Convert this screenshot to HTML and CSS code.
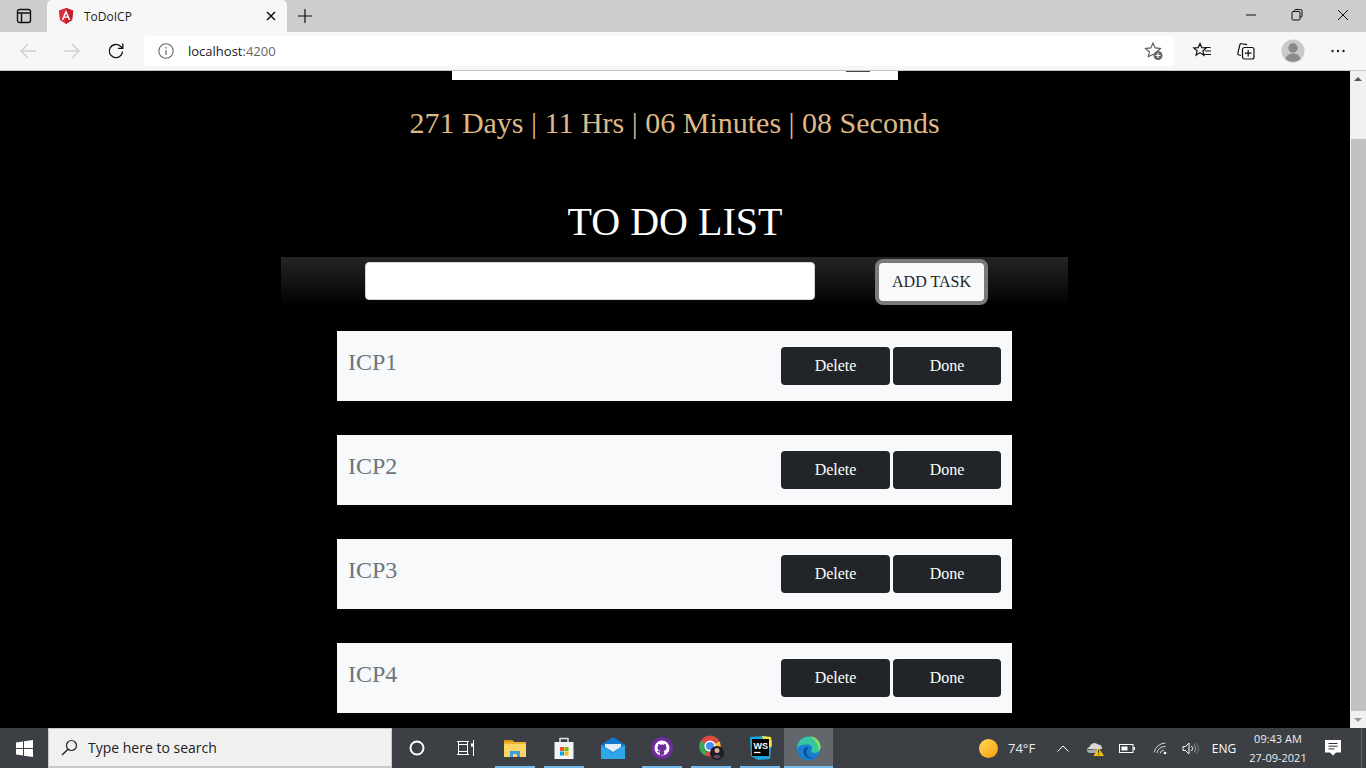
FILE: index.html
```html
<!DOCTYPE html>
<html lang="en">
<head>
<meta charset="utf-8">
<title>ToDoICP</title>
<link rel="stylesheet" href="styles.css">
</head>
<body>
<div class="tabstrip">
  <div class="tabcell">
    <svg width="16" height="16" viewBox="0 0 16 16" class="ico"><rect x="1.5" y="1.5" width="13" height="13" rx="2" fill="none" stroke="#111" stroke-width="1.4"/><path d="M1.5 5h13M5.5 5v9.5" fill="none" stroke="#111" stroke-width="1.4"/></svg>
  </div>
  <div class="tab">
    <svg width="16" height="16" viewBox="0 0 16 16" class="favicon"><path d="M8 0 .8 2.6l1.1 9.5L8 16l6.1-3.9 1.1-9.5z" fill="#dd2c39"/><path d="M8 0v16l6.1-3.9 1.1-9.5z" fill="#c3202e"/><path d="M8 2 3.6 12h1.7l.9-2.2h3.6l.9 2.2h1.7zm-1.2 6.4L8 5.4l1.2 3z" fill="#fff"/></svg>
    <span class="tabtitle">ToDoICP</span>
    <svg width="10" height="10" viewBox="0 0 10 10" class="tabclose"><path d="M1 1l8 8M9 1 1 9" stroke="#111" stroke-width="1.5"/></svg>
  </div>
  <svg width="16" height="16" viewBox="0 0 16 16" class="newtab"><path d="M8 1v14M1 8h14" stroke="#111" stroke-width="1.2"/></svg>
  <div class="winbtns">
    <div class="winbtn"><svg width="12" height="12" viewBox="0 0 12 12"><path d="M1 6h10" stroke="#111" stroke-width="1"/></svg></div>
    <div class="winbtn"><svg width="12" height="12" viewBox="0 0 12 12"><path d="M3.5 2.5V1.5a1 1 0 0 1 1-1h5a1.500 1.500 0 0 1 1.500 1.500v5a1 1 0 0 1-1 1h-1" fill="none" stroke="#111"/><rect x="1" y="2.500" width="8" height="8.500" rx="1" fill="none" stroke="#111"/></svg></div>
    <div class="winbtn"><svg width="12" height="12" viewBox="0 0 12 12"><path d="M1 1l10 10M11 1 1 11" stroke="#111" stroke-width="1"/></svg></div>
  </div>
</div>
<div class="toolbar">
  <svg class="navico" width="18" height="18" viewBox="0 0 18 18"><path d="M17 9H2M9 2 2 9l7 7" fill="none" stroke="#cfcfcf" stroke-width="1.3"/></svg>
  <svg class="navico" width="18" height="18" viewBox="0 0 18 18"><path d="M1 9h15M9 2l7 7-7 7" fill="none" stroke="#cfcfcf" stroke-width="1.3"/></svg>
  <svg class="navico" width="18" height="18" viewBox="0 0 18 18"><path d="M15.500 9.500a6.600 6.600 0 1 1-2-5.200L15.500 6" fill="none" stroke="#111" stroke-width="1.300"/><path d="M15.800 1.500V6.300H11" fill="none" stroke="#111" stroke-width="1.300"/></svg>
  <div class="address">
    <svg width="16" height="16" viewBox="0 0 16 16" class="info"><circle cx="8" cy="8" r="7.200" fill="none" stroke="#666" stroke-width="1.100"/><path d="M8 7v5M8 4v1.400" stroke="#666" stroke-width="1.200"/></svg>
    <span class="url">localhost<span class="port">:4200</span></span>
    <svg width="20" height="20" viewBox="0 0 20 20" class="addfav"><path d="M9 2l2.200 4.900 5.300.6-3.900 3.500 1 4.800L9 13.300l-4.600 2.500 1-4.800L1.500 7.500l5.300-.6z" fill="none" stroke="#555" stroke-width="1.100"/><circle cx="14" cy="14.500" r="4.500" fill="#666"/><path d="M14 12v5M11.500 14.500h5" stroke="#fff" stroke-width="1.100"/></svg>
  </div>
  <div class="tools">
    <svg width="20" height="20" viewBox="-2 0 20 20"><path d="M7 2.500l1.800 4.100 4.400.4-3.300 3 1 4.300L7 11.600l-3.900 2.500 1-4.300L.8 7l4.400-.4z" fill="#f7f7f7" stroke="#111" stroke-width="1.200"/><path d="M11.500 6.500h6M12 10h6M11 13.500h7" stroke="#111" stroke-width="1.200"/></svg>
    <svg width="20" height="20" viewBox="0 0 20 20"><path d="M5 14.500l-2-.5a1.500 1.500 0 0 1-1.100-1.800L3.800 3.800A1.500 1.500 0 0 1 5.600 2.700L11 3.700" fill="none" stroke="#111" stroke-width="1.200"/><rect x="6.500" y="6.500" width="11.500" height="11.500" rx="2" fill="none" stroke="#111" stroke-width="1.200"/><path d="M12.200 9v6.500M9 12.200h6.500" stroke="#111" stroke-width="1.200"/></svg>
    <svg width="24" height="24" viewBox="0 0 24 24"><circle cx="12" cy="12" r="11.500" fill="#c9c9c9"/><circle cx="12" cy="9" r="4.700" fill="#8a8a8a"/><path d="M4.500 20c1-4 4-5.500 7.500-5.500s6.500 1.500 7.500 5.500a11.500 11.500 0 0 1-15 0z" fill="#8a8a8a"/></svg>
    <svg width="16" height="16" viewBox="0 0 16 16"><circle cx="2.500" cy="8" r="1.200" fill="#222"/><circle cx="8" cy="8" r="1.200" fill="#222"/><circle cx="13.500" cy="8" r="1.200" fill="#222"/></svg>
  </div>
</div>
<div class="viewport">
  <main class="page">
    <div class="strip"><span class="stripmark"></span></div>
    <div class="timer">271 Days | 11 Hrs | 06 Minutes | 08 Seconds</div>
    <h1 class="heading">TO DO LIST</h1>
    <form class="addbar">
      <input class="taskinput" type="text" aria-label="Task">
      <button class="addbtn" type="button">ADD TASK</button>
    </form>
    <ul class="tasks">
      <li class="task"><span class="taskname">ICP1</span><span class="actions"><button class="act del" type="button">Delete</button><button class="act done" type="button">Done</button></span></li>
      <li class="task"><span class="taskname">ICP2</span><span class="actions"><button class="act del" type="button">Delete</button><button class="act done" type="button">Done</button></span></li>
      <li class="task"><span class="taskname">ICP3</span><span class="actions"><button class="act del" type="button">Delete</button><button class="act done" type="button">Done</button></span></li>
      <li class="task"><span class="taskname">ICP4</span><span class="actions"><button class="act del" type="button">Delete</button><button class="act done" type="button">Done</button></span></li>
    </ul>
  </main>
  <div class="scrollbar">
    <span class="arrow up"></span>
    <div class="thumb"></div>
    <span class="arrow down"></span>
  </div>
</div>
<footer class="taskbar">
  <div class="startbtn"><svg width="17" height="17" viewBox="0 0 17 17"><path d="M0 2.500 7 1.500V8H0zM8 1.300 17 0v8H8zM0 9h7v6.500l-7-1zM8 9h9v8l-9-1.300z" fill="#fff"/></svg></div>
  <div class="searchbox">
    <svg width="17" height="17" viewBox="0 0 17 17"><circle cx="10.500" cy="6.500" r="5" fill="none" stroke="#222" stroke-width="1.200"/><path d="M7 10.200 1 16" stroke="#222" stroke-width="1.400"/></svg>
    <span>Type here to search</span>
  </div>
  <div class="tb"><svg width="16" height="16" viewBox="0 0 16 16"><circle cx="8" cy="8" r="6.500" fill="none" stroke="#fff" stroke-width="2"/></svg></div>
  <div class="tb"><svg width="18" height="16" viewBox="0 0 18 16"><path d="M0 1.500h12M0 14.500h12M1.500 1.500v13M10.500 1.500v13M1.500 4.500h9M1.500 11.500h9" fill="none" stroke="#fff"/><path d="M16.500 0v16" stroke="#fff"/><rect x="14" y="3.500" width="3" height="3" fill="#fff"/></svg></div>
  <div class="tb on"><svg width="22" height="18" viewBox="0 0 22 18"><path d="M0 1h8l2 2h12v15H0z" fill="#f0b429"/><path d="M0 1h8l2 2H0z" fill="#d99a1c"/><path d="M0 5h22v13H0z" fill="#fbd666"/><path d="M6 12h10v6h-3v-3H9v3H6z" fill="#3f9be0"/></svg></div>
  <div class="tb on"><svg width="24" height="24" viewBox="0 0 24 24"><path d="M8 6V2.500h8V6" fill="none" stroke="#ddd" stroke-width="1.500"/><path d="M2.500 6h19v17h-19z" fill="#f3f3f3"/><rect x="8" y="11" width="4" height="4" fill="#f25022"/><rect x="12.500" y="11" width="4" height="4" fill="#7fba00"/><rect x="8" y="15.500" width="4" height="4" fill="#00a4ef"/><rect x="12.500" y="15.500" width="4" height="4" fill="#ffb900"/></svg></div>
  <div class="tb"><svg width="24" height="22" viewBox="0 0 24 22"><path d="M0 8 12 0l12 8v14H0z" fill="#0f78d4"/><path d="M0 8l12 8 12-8v14H0z" fill="#2ea6ea"/><path d="M4 7h16v3l-8 5-8-5z" fill="#dfeefa"/></svg></div>
  <div class="tb on"><svg width="22" height="22" viewBox="0 0 22 22"><circle cx="11" cy="11" r="11" fill="#6e2c9c"/><circle cx="11" cy="11" r="7.500" fill="#fff"/><path d="M8.800 18.500v-3c-1.800.3-2.400-.7-2.700-1.300l1.200-.4c.4.500.8.900 1.700.7.100-.4.300-.6.500-.8-1.800-.2-3-1-3-3 0-.8.300-1.400.7-1.900-.1-.3-.2-1 .1-1.800 0 0 .6-.2 1.900.7a6.500 6.500 0 0 1 3.600 0c1.300-.9 1.900-.7 1.900-.7.300.8.200 1.500.1 1.800.4.500.7 1.100.7 1.900 0 2-1.200 2.800-3 3 .3.300.6.700.6 1.500v2.300z" fill="#6e2c9c"/></svg></div>
  <div class="tb on"><svg class="chromeico" width="26" height="26" viewBox="0 0 26 26"><circle cx="11" cy="11" r="10.500" fill="#dd4b3e"/><path d="M11 11 20.600 6.500A10.500 10.500 0 0 1 14 21z" fill="#f6c22e"/><path d="M11 11 6 20.500A10.500 10.500 0 0 1 1.500 6z" fill="#3aa757"/><circle cx="11" cy="11" r="4.800" fill="#4b8df5" stroke="#fff" stroke-width="1.500"/><circle cx="18" cy="18" r="7" fill="#1f1a24"/><circle cx="18" cy="15.500" r="2.500" fill="#d9b09a"/><path d="M14 22c.5-3 7-3 8 0l-4 2z" fill="#5a4a5c"/></svg></div>
  <div class="tb on"><svg width="24" height="24" viewBox="0 0 24 24"><path d="M2 1l15-1 7 4-2 19-12 1-7-4z" fill="#19a7e0"/><path d="M14 0l9 1 1 9-5 3z" fill="#f5e43c"/><rect x="4" y="3" width="17" height="17" fill="#000"/><text x="5.500" y="13" class="wstext">WS</text><path d="M6 16.500h6.500" stroke="#fff" stroke-width="1.300"/></svg></div>
  <div class="tb on active"><svg width="25" height="25" viewBox="0 0 25 25"><circle cx="12.500" cy="12.500" r="12" fill="#1a7fd0"/><path d="M1 13C1 5 7 .5 13 .5c6.500 0 11.500 5 11.500 10.500 0 4-3 6-6 6-2 0-3.500-1-3.500-2 2-2 1.500-6-3-6.500C7 8 1 10 1 13z" fill="#37c6a0"/><path d="M14 .5c5.500 0 10.500 4.500 10.500 10.500 0 2-1 3.500-2 4.500.5-6-3-12-8.500-15z" fill="#86df55"/><path d="M11.500 11c-3 0-5 3-3.800 6.500C9 21.500 14 24 19.500 21.500c-4.500 1-8.500-1-9-4.500-.2-2.500 1-4.500 2.500-5.300z" fill="#0c4f9c"/></svg></div>
  <div class="tray">
    <div class="weather"><span class="sun"></span><span class="temp">74°F</span></div>
    <div class="traycell w36"><svg width="12" height="7" viewBox="0 0 12 7"><path d="M.5 6.500 6 1l5.500 5.500" fill="none" stroke="#fff" stroke-width="1"/></svg></div>
    <div class="traycell w28"><svg width="18" height="15" viewBox="0 0 18 15"><path d="M1 9a3 3 0 0 1 2.500-3A5 5 0 0 1 12 3.500 4 4 0 0 1 16 8H2z" fill="#d8d8d8"/><path d="M1 9a3 3 0 0 0 3 3h6l3-4z" fill="#a9a9a9"/><path d="M12.500 6.500 18 15H7.500z" fill="#f4c20d"/><path d="M12.700 9v3M12.700 13v1" stroke="#222"/></svg></div>
    <div class="traycell w36"><svg width="16" height="9" viewBox="0 0 16 9"><rect x=".5" y=".5" width="13.500" height="8" fill="none" stroke="#fff"/><rect x="2.500" y="2.500" width="6" height="4" fill="#fff"/><rect x="14.500" y="3" width="1.500" height="3" fill="#fff"/></svg></div>
    <div class="traycell w30"><svg width="15" height="13" viewBox="0 0 15 13"><path d="M1 10.500A12 12 0 0 1 12.500 1M4 11a8 8 0 0 1 8.500-6.500M7 11.500A4.500 4.500 0 0 1 11 8" fill="none" stroke="#d5d5d5"/><circle cx="12" cy="11" r="1.300" fill="#fff"/></svg></div>
    <div class="traycell w30"><svg width="17" height="13" viewBox="0 0 17 13"><path d="M1 4.500h2.500L7 1v11L3.500 8.500H1z" fill="none" stroke="#fff"/><path d="M9.500 4a3.500 3.500 0 0 1 0 5" fill="none" stroke="#fff"/><path d="M12 2.500a6 6 0 0 1 0 8" fill="none" stroke="#aaa"/><path d="M14.500 1a8.500 8.500 0 0 1 0 11" fill="none" stroke="#777"/></svg></div>
    <div class="lang">ENG</div>
    <div class="clock"><div>09:43 AM</div><div>27-09-2021</div></div>
    <div class="notif"><svg width="16" height="16" viewBox="0 0 16 16"><path d="M0 0h16v12.500h-5L8 15.500 5 12.500H0z" fill="#fff"/><path d="M3.500 3.500h9M3.500 6.200h9M3.500 8.900h6" stroke="#333" stroke-width="1"/></svg></div>
    <div class="showdesk"></div>
  </div>
</footer>
</body>
</html>
```
FILE: styles.css
```css
* { box-sizing: border-box; }
html, body { margin: 0; height: 100%; overflow: hidden; }
body { display: flex; flex-direction: column; height: 768px; font-family: "Open Sans", "Noto Sans", sans-serif; background: #000; }
svg { display: block; flex: none; }

.tabstrip { height: 32px; background: #cdcdcd; display: flex; align-items: flex-end; flex: none; }
.tabcell { width: 47px; height: 32px; display: flex; align-items: center; justify-content: center; }
.tab { width: 240px; height: 32px; background: #f7f7f7; border-radius: 5px 5px 0 0; display: flex; align-items: center; padding: 0 11px 0 11px; }
.favicon { margin-right: 10px; }
.tabtitle { font-size: 12px; color: #222; flex: 1; }
.newtab { align-self: center; margin-left: 10px; }
.winbtns { margin-left: auto; display: flex; height: 32px; }
.winbtn { width: 46px; height: 30px; display: flex; align-items: center; justify-content: center; }

.toolbar { height: 39px; background: #f7f7f7; border-bottom: 1px solid #c4c4c4; display: flex; align-items: center; padding: 0 20px 1px 19px; flex: none; }
.navico { margin-right: 26px; }
.navico:nth-child(3) { margin-right: 19px; }
.address { width: 1030px; height: 30px; background: #fff; border-radius: 4px; display: flex; align-items: center; padding: 0 10px 0 14px; }
.info { margin-right: 14px; }
.url { font-size: 13px; color: #222; flex: 1; }
.port { color: #666; }
.tools { display: flex; align-items: center; margin-left: 17px; flex: 1; justify-content: space-between; }

.viewport { height: 657px; display: flex; flex: none; overflow: hidden; }
.page { flex: 1; background: #000; display: flex; flex-direction: column; align-items: center; font-family: "Liberation Serif", serif; }
.strip { width: 446px; height: 9px; background: #fff; display: flex; justify-content: flex-end; padding-right: 28px; flex: none; }
.stripmark { width: 24px; height: 1px; background: #444; }
.timer { margin: 26px 1px 0 0; font-size: 30px; line-height: 34px; color: #deb887; text-align: center; }
.heading { margin: 58px 0 0; font-size: 40px; line-height: 48px; font-weight: 400; color: #fff; }
.addbar { margin: 11px 1px 0 0; width: 787px; height: 50px; background: linear-gradient(#252525, #000); display: flex; align-items: flex-start; padding: 2px 0 0 84px; flex: none; }
.taskinput { margin-top: 3px; width: 450px; height: 38px; background: #fff; border: 1px solid #ced4da; border-radius: 4px; }
.addbtn { margin-left: 60px; width: 113px; height: 46px; background: #f8f9fa; border: 4px solid #7a7a7a; border-radius: 8px; font: 16px "Liberation Serif", serif; color: #212529; padding: 0; }
.tasks { list-style: none; margin: 24px 1px 0 0; padding: 0; width: 675px; display: flex; flex-direction: column; gap: 34px; flex: none; }
.task { height: 70px; background: #f8f9fa; display: flex; justify-content: space-between; align-items: flex-start; padding: 16px 11px; }
.taskname { font-size: 24px; line-height: 28px; color: #6c757d; margin-top: 1px; }
.actions { display: flex; gap: 3px; }
.act { height: 38px; background: #212529; color: #fff; border: 0; border-radius: 4px; font: 16px "Liberation Serif", serif; padding: 0; }
.del { width: 109px; }
.done { width: 108px; }

.scrollbar { width: 16px; background: #f1f1f1; display: flex; flex-direction: column; align-items: center; justify-content: space-between; position: relative; flex: none; padding: 6px 0; }
.thumb { position: absolute; left: 1px; right: 0; top: 68px; bottom: 17px; background: #c1c1c1; }
.arrow { width: 0; height: 0; border-left: 4px solid transparent; border-right: 4px solid transparent; }
.up { border-bottom: 4px solid #555; }
.down { border-top: 4px solid #999; position: relative; }

.taskbar { height: 40px; background: #3c4045; display: flex; align-items: stretch; flex: none; color: #fff; }
.startbtn { width: 48px; display: flex; align-items: center; justify-content: center; }
.searchbox { width: 344px; background: #f0f0f0; border: 1px solid #c9c9c9; border-bottom-width: 2px; display: flex; align-items: center; padding-left: 12px; gap: 10px; font-size: 14px; color: #222; }
.tb { width: 49px; display: flex; align-items: center; justify-content: center; position: relative; }
.tb.on::after { content: ""; position: absolute; left: 5px; right: 4px; bottom: 0; height: 2px; background: #76b9ed; }
.tb.active { background: #63676b; }
.tb.active::after { left: 0; right: 0; }
.chromeico { margin-left: 2px; }
.wstext { font: 700 9px "Liberation Sans", sans-serif; fill: #fff; }
.tray { margin-left: auto; display: flex; align-items: center; font-size: 12px; }
.weather { display: flex; align-items: center; width: 66px; gap: 10px; }
.sun { width: 19px; height: 19px; border-radius: 50%; background: linear-gradient(135deg, #ffdc5a, #f99a0a); }
.temp { font-size: 13px; color: #eee; }
.traycell { display: flex; align-items: center; justify-content: center; }
.w28 { width: 28px; }
.w30 { width: 30px; }
.w36 { width: 36px; }
.lang { width: 38px; text-align: center; font-size: 12px; }
.clock { width: 70px; text-align: center; font-size: 11px; line-height: 19px; color: #eee; }
.notif { width: 40px; display: flex; justify-content: center; }
.showdesk { width: 5px; height: 40px; border-left: 1px solid #666; margin-left: 8px; }
```
